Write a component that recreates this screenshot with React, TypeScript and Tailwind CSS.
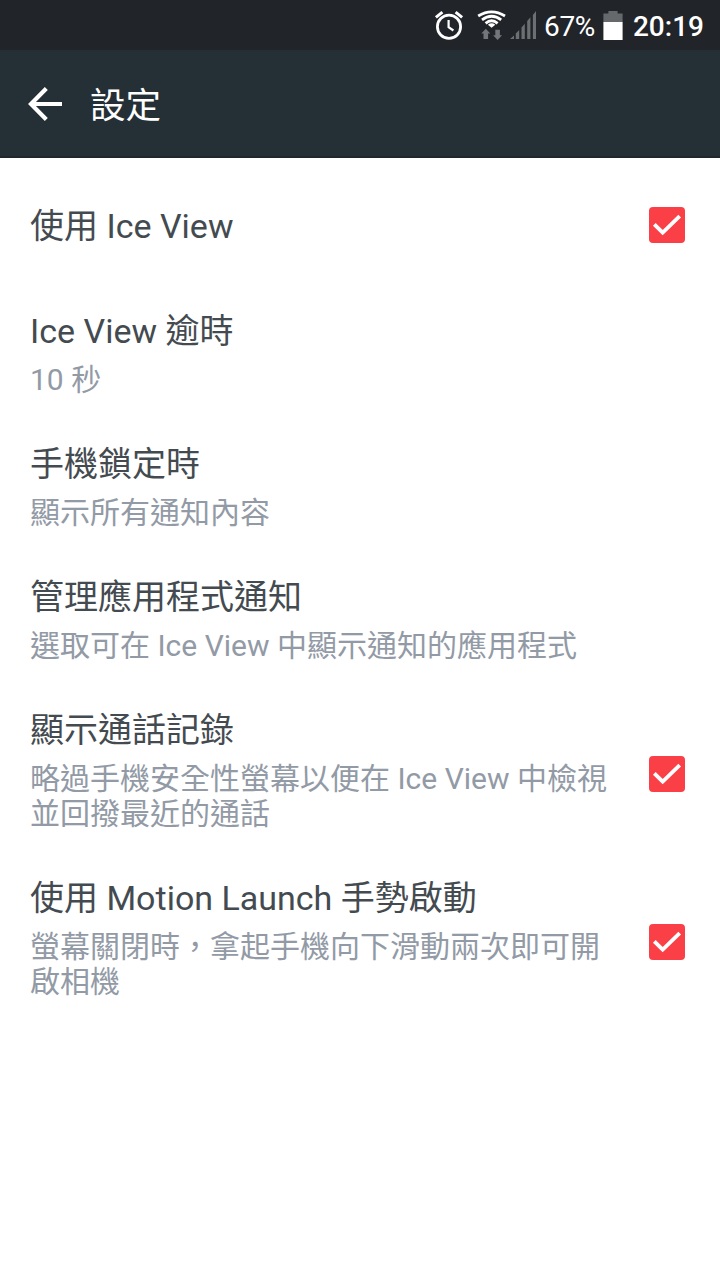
type Setting = {
  title: string;
  description?: string;
  checked?: boolean;
};

const settings: Setting[] = [
  { title: "使用 Ice View", checked: true },
  { title: "Ice View 逾時", description: "10 秒" },
  { title: "手機鎖定時", description: "顯示所有通知內容" },
  {
    title: "管理應用程式通知",
    description: "選取可在 Ice View 中顯示通知的應用程式",
  },
  {
    title: "顯示通話記錄",
    description: "略過手機安全性螢幕以便在 Ice View 中檢視並回撥最近的通話",
    checked: true,
  },
  {
    title: "使用 Motion Launch 手勢啟動",
    description: "螢幕關閉時，拿起手機向下滑動兩次即可開啟相機",
    checked: true,
  },
];

const AlarmIcon = () => (
  <svg width="30" height="32" viewBox="0 0 30 32" fill="none" stroke="#fff" className="shrink-0">
    <circle cx="15" cy="16.8" r="11.6" strokeWidth="2.8" />
    <path d="M14.6 10v7.2l4.8 3.3" strokeWidth="2.2" />
    <path d="M1.9 7.4L8.4 2.2M28.1 7.4L21.6 2.2" strokeWidth="3" />
  </svg>
);

const WifiIcon = () => (
  <svg width="30" height="32" viewBox="0 0 30 32" fill="none" className="shrink-0">
    <g stroke="#fff" strokeWidth="2.8">
      <path d="M1.2 6Q14.6 -2.4 28 6" />
      <path d="M5 9.8Q14.6 2.8 24.2 9.8" />
      <path d="M8.6 13.4Q14.6 8.2 20.6 13.4" />
    </g>
    <path d="M10.9 14.7Q14.6 12 18.3 14.7L14.6 17.8z" fill="#fff" />
    <path d="M8.8 18.7l4.5 4.8h-2.2v5.6H6.5v-5.6H4.3z" fill="#73777a" />
    <path d="M20.6 30l-4.5-4.8h2.2v-5.4h4.6v5.4h2.2z" fill="#73777a" />
  </svg>
);

const SignalIcon = () => (
  <svg width="27" height="29" viewBox="0 0 27 29" fill="#6c7073" className="shrink-0">
    <path d="M0 28L4 24.5V28zM5.8 22.5l3.4-3.6V28H5.8zM11.5 16.5l3.3-3.8V28h-3.3zM17.2 10l3.2-3.8V28h-3.2zM22.9 4L26 0v28h-3.1z" />
  </svg>
);

const BatteryIcon = () => (
  <svg width="20" height="30" viewBox="0 0 20 30" className="shrink-0">
    <path d="M5.4 0h9.2v2.5h5V11H.4V2.5h5z" fill="#65696c" />
    <path d="M.4 11h19.2v18H.4z" fill="#fff" />
  </svg>
);

const StatusBar = () => (
  <div className="flex h-[50px] items-center justify-end bg-[#212429] pr-4 pt-px text-[28px] leading-none text-white">
    <AlarmIcon />
    <div className="ml-[13px]">
      <WifiIcon />
    </div>
    <div className="ml-[3px]">
      <SignalIcon />
    </div>
    <span className="ml-[7px] mt-0.5 w-[52px] whitespace-nowrap tracking-[-0.3px]">67%</span>
    <div className="ml-[7px]">
      <BatteryIcon />
    </div>
    <span className="ml-[10px] mt-0.5 font-medium">20:19</span>
  </div>
);

const Header = () => (
  <header className="flex h-[108px] items-center border-b-2 border-[#20262b] bg-[#243036] pl-7 pt-0.5 text-white">
    <svg width="34" height="34" viewBox="0 0 34 34" fill="none" stroke="#fff" strokeWidth="4.2">
      <path d="M18.3 1.5L3 17l15.3 15.5M3 17h31" />
    </svg>
    <h1 className="ml-[28px] pt-1 text-[35.5px] leading-[40px]">設定</h1>
  </header>
);

const Checkbox = () => (
  <div className="flex size-9 shrink-0 items-center justify-center rounded-[4px] bg-[#fb3f46]">
    <svg width="36" height="36" viewBox="0 0 36 36" fill="none" stroke="#fff" strokeWidth="3.8">
      <path d="M5.3 17.3l8.4 8.4L30.7 9.2" />
    </svg>
  </div>
);

const SettingRow = ({ title, description, checked }: Setting) => (
  <div
    className={`flex min-h-[133px] pl-[30px] pr-[35px] ${description ? "items-stretch" : "items-center"}`}
  >
    <div className={`w-[590px] ${description ? "pb-[27px] pt-5" : "pt-0.5"}`}>
      <h2 className="text-[34px] leading-[40px] text-[#444b50]">{title}</h2>
      {description && (
        <p className="mt-[11px] break-all text-[30px] leading-[35px] text-[#929aa6]">{description}</p>
      )}
    </div>
    {checked && (
      <div className="ml-auto flex items-center">
        <Checkbox />
      </div>
    )}
  </div>
);

export default function App() {
  return (
    <div
      lang="zh-Hant"
      className="flex h-[1280px] w-[720px] flex-col overflow-hidden bg-white font-[Roboto,'Noto_Sans_CJK_TC',sans-serif]"
    >
      <StatusBar />
      <Header />
      <main className="flex-1">
        {settings.map((setting) => (
          <SettingRow key={setting.title} {...setting} />
        ))}
      </main>
    </div>
  );
}
